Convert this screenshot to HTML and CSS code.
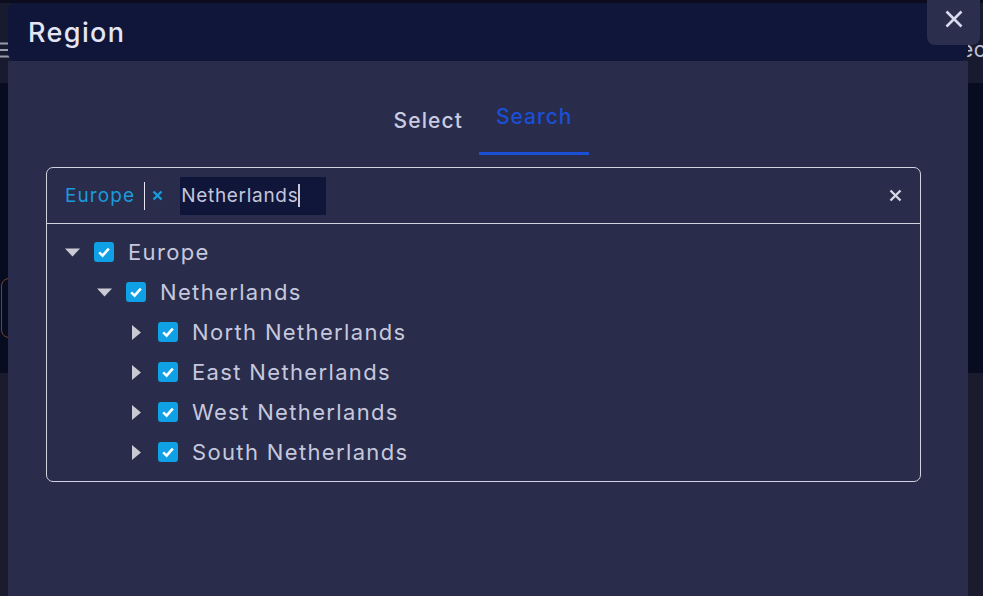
FILE: index.html
```html
<!DOCTYPE html>
<html>
<head>
<meta charset="utf-8">
<link rel="stylesheet" href="styles.css">
</head>
<body>
<div class="app">
  <div class="app-top"></div>
  <div class="app-header">
    <svg class="burger" width="20" height="16" viewBox="0 0 20 16"><path d="M0 1.5H20M0 8H20M0 14.5H20" stroke="#9a9cae" stroke-width="2"/></svg>
    <span class="app-title">Sec</span>
  </div>
  <div class="app-main">
    <div class="app-card"></div>
  </div>
  <div class="app-bottom"></div>
</div>

<div class="modal">
  <div class="modal-header">
    <h1 class="modal-title">Region</h1>
  </div>
  <div class="modal-body">
    <div class="tabs">
      <div class="tab">Select</div>
      <div class="tab tab-active">Search</div>
    </div>
    <div class="picker">
      <div class="picker-input">
        <span class="tag">Europe</span>
        <span class="tag-sep"></span>
        <svg class="tag-x" width="11" height="11" viewBox="0 0 11 11"><path d="M1.5 1.5L9.5 9.5M9.5 1.5L1.5 9.5" stroke="#1a9bdc" stroke-width="2.4"/></svg>
        <span class="query">Netherland<span class="caret-end">s</span></span>
        <svg class="clear" width="13" height="13" viewBox="0 0 13 13"><path d="M1.5 1.5L11.5 11.5M11.5 1.5L1.5 11.5" stroke="#d6d8e4" stroke-width="2.4"/></svg>
      </div>
      <div class="tree">
        <div class="row lvl0">
          <svg class="exp" width="17" height="15" viewBox="0 0 17 15"><polygon points="1,3.5 16,3.5 8.5,11.5" fill="#c9cad3"/></svg>
          <span class="cb"><svg width="20" height="20" viewBox="0 0 20 20"><path d="M5.2 10.4L8.6 13.6L14.8 6.6" fill="none" stroke="#fff" stroke-width="2.6"/></svg></span>
          <span class="label">Europe</span>
        </div>
        <div class="row lvl1">
          <svg class="exp" width="17" height="15" viewBox="0 0 17 15"><polygon points="1,3.5 16,3.5 8.5,11.5" fill="#c9cad3"/></svg>
          <span class="cb"><svg width="20" height="20" viewBox="0 0 20 20"><path d="M5.2 10.4L8.6 13.6L14.8 6.6" fill="none" stroke="#fff" stroke-width="2.6"/></svg></span>
          <span class="label">Netherlands</span>
        </div>
        <div class="row lvl2">
          <svg class="exp" width="17" height="15" viewBox="0 0 17 15"><polygon points="4,0 13,7.5 4,15" fill="#c9cad3"/></svg>
          <span class="cb"><svg width="20" height="20" viewBox="0 0 20 20"><path d="M5.2 10.4L8.6 13.6L14.8 6.6" fill="none" stroke="#fff" stroke-width="2.6"/></svg></span>
          <span class="label">North Netherlands</span>
        </div>
        <div class="row lvl2">
          <svg class="exp" width="17" height="15" viewBox="0 0 17 15"><polygon points="4,0 13,7.5 4,15" fill="#c9cad3"/></svg>
          <span class="cb"><svg width="20" height="20" viewBox="0 0 20 20"><path d="M5.2 10.4L8.6 13.6L14.8 6.6" fill="none" stroke="#fff" stroke-width="2.6"/></svg></span>
          <span class="label">East Netherlands</span>
        </div>
        <div class="row lvl2">
          <svg class="exp" width="17" height="15" viewBox="0 0 17 15"><polygon points="4,0 13,7.5 4,15" fill="#c9cad3"/></svg>
          <span class="cb"><svg width="20" height="20" viewBox="0 0 20 20"><path d="M5.2 10.4L8.6 13.6L14.8 6.6" fill="none" stroke="#fff" stroke-width="2.6"/></svg></span>
          <span class="label">West Netherlands</span>
        </div>
        <div class="row lvl2">
          <svg class="exp" width="17" height="15" viewBox="0 0 17 15"><polygon points="4,0 13,7.5 4,15" fill="#c9cad3"/></svg>
          <span class="cb"><svg width="20" height="20" viewBox="0 0 20 20"><path d="M5.2 10.4L8.6 13.6L14.8 6.6" fill="none" stroke="#fff" stroke-width="2.6"/></svg></span>
          <span class="label">South Netherlands</span>
        </div>
      </div>
    </div>
  </div>
</div>

<button class="close" aria-label="Close">
  <svg width="18" height="18" viewBox="0 0 18 18"><path d="M1.5 1.5L16.5 16.5M16.5 1.5L1.5 16.5" stroke="#d8dbee" stroke-width="2.6"/></svg>
</button>
</body>
</html>
```

FILE: styles.css
```css
* { box-sizing: border-box; }

html, body {
  margin: 0;
  padding: 0;
  width: 983px;
  height: 596px;
  overflow: hidden;
  background: #1a1c2e;
  font-family: Inter, "DejaVu Sans", sans-serif;
}

/* underlying application */
.app {
  display: flex;
  flex-direction: column;
  height: 596px;
}
.app-top {
  height: 3px;
  background: #0b0d1e;
}
.app-header {
  height: 80px;
  background: #181a30;
  display: flex;
  align-items: center;
}
.burger {
  flex: none;
  margin-left: -10px;
  margin-top: 14px;
}
.app-title {
  margin-left: 937px;
  margin-top: 12px;
  font-size: 21px;
  color: #c0c2d2;
  white-space: nowrap;
  letter-spacing: 0.5px;
}
.app-main {
  height: 290px;
  background: #080c20;
  padding-top: 195px;
  padding-left: 1px;
}
.app-card {
  width: 120px;
  height: 60px;
  border: 1px solid #7a4420;
  border-radius: 8px;
}
.app-bottom {
  flex: 1;
  background: #1a1c2e;
}

/* modal */
.modal {
  position: absolute;
  left: 8px;
  top: 3px;
  width: 960px;
  height: 600px;
  display: flex;
  flex-direction: column;
}
.modal-header {
  height: 58px;
  background: #10163a;
  border-radius: 8px;
  display: flex;
  align-items: center;
  padding-left: 20px;
}
.modal-title {
  margin: 0;
  font-size: 27px;
  font-weight: 500;
  color: #e4e6f5;
  letter-spacing: 1.4px;
}
.modal-body {
  flex: 1;
  background: #292c4a;
  padding: 0 47px 0 38px;
}

.tabs {
  display: flex;
  justify-content: center;
  height: 106px;
}
.tab {
  height: 94px;
  padding: 47px 16px 0 16px;
  font-size: 21px;
  font-weight: 500;
  color: #c9cce0;
  letter-spacing: 1.1px;
}
.tab-active {
  padding: 43px 17px 0 17px;
  color: #1a4fd6;
  border-bottom: 3px solid #1a4fd6;
  letter-spacing: 1px;
}

.picker {
  border: 1px solid #d0d2e0;
  border-radius: 7px;
}
.picker-input {
  height: 56px;
  border-bottom: 1px solid #d0d2e0;
  display: flex;
  align-items: center;
  padding-left: 18px;
  padding-right: 18px;
}
.tag {
  font-size: 19px;
  color: #1a9bdc;
  letter-spacing: 1.1px;
}
.tag-sep {
  flex: none;
  width: 1px;
  height: 28px;
  background: #e6e7f2;
  margin-left: 9px;
}
.tag-x {
  flex: none;
  margin-left: 7px;
}
.query {
  margin-left: 17px;
  width: 146px;
  height: 38px;
  background: #10163a;
  color: #c3c6dc;
  font-size: 19px;
  line-height: 38px;
  padding-left: 1px;
  white-space: nowrap;
  letter-spacing: 0.7px;
}
.caret-end {
  border-right: 2px solid #c3c6dc;
  letter-spacing: 0;
}
.clear {
  flex: none;
  margin-left: auto;
}

.tree {
  padding: 8px 0 9px;
}
.row {
  height: 40px;
  display: flex;
  align-items: center;
}
.lvl0 { padding-left: 17px; }
.lvl1 { padding-left: 49px; }
.lvl2 { padding-left: 81px; }
.exp {
  flex: none;
}
.cb {
  flex: none;
  width: 20px;
  height: 20px;
  border-radius: 3px;
  background: #0fa0e6;
  margin-left: 13px;
  display: flex;
}
.label {
  margin-left: 14px;
  font-size: 22px;
  color: #c5c8dd;
  white-space: nowrap;
  letter-spacing: 1.35px;
}

.close {
  position: absolute;
  left: 927px;
  top: 0;
  width: 53px;
  height: 45px;
  border: none;
  padding: 0 0 7px 0;
  background: #2b2e4d;
  border-radius: 0 0 8px 8px;
  display: flex;
  align-items: center;
  justify-content: center;
}
```
